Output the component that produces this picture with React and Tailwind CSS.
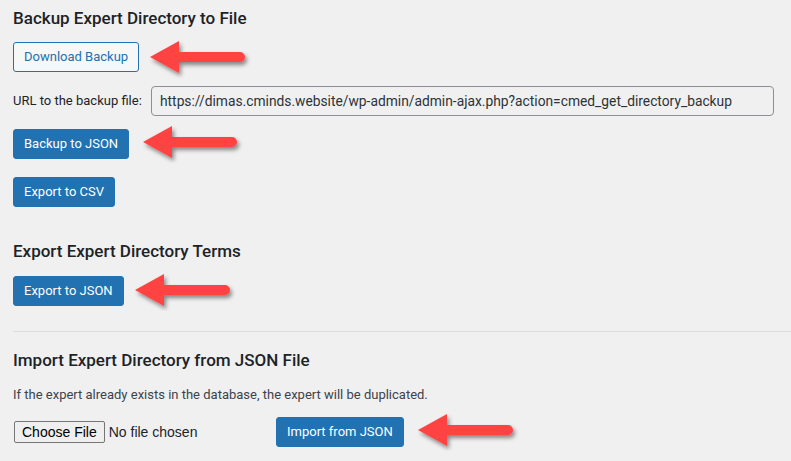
import React from "react";

const Arrow = ({ length = 96 }) => (
  <div className="h-[30px] flex items-center shrink-0">
    <svg width={length + 8} height="42" viewBox={`0 0 ${length + 8} 42`} className="shrink-0 block">
      <defs>
        <filter id="ashadow" x="-20%" y="-40%" width="140%" height="180%">
          <feDropShadow dx="2" dy="3" stdDeviation="2" floodColor="#000" floodOpacity="0.45" />
        </filter>
      </defs>
      <g filter="url(#ashadow)">
        <path
          d={`M1 21 L30 5 L30 16 L${length - 5} 16 A5 5 0 0 1 ${length - 5} 26 L30 26 L30 37 Z`}
          fill="#ff4242"
        />
      </g>
    </svg>
  </div>
);

const PrimaryBtn = ({ children }) => (
  <button className="h-[30px] px-[10px] rounded-[3px] bg-[#2271b1] text-white text-[13px] leading-[28px] border border-[#2271b1] whitespace-nowrap shrink-0">
    {children}
  </button>
);

export default function App() {
  return (
    <div
      className="w-full h-[461px] bg-[#f0f0f1] pl-[13px] overflow-hidden text-[#1d2327]"
      style={{ fontFamily: 'Roboto, "Noto Sans", sans-serif' }}
    >
      <div className="pt-[7px]">
        <h2 className="text-[17px] leading-[22px] font-medium">Backup Expert Directory to File</h2>

        <div className="mt-[13px] flex items-center gap-[10px]">
          <button className="h-[30px] px-[10px] rounded-[3px] bg-[#f6f7f7] text-[#2271b1] text-[13px] border border-[#2271b1] whitespace-nowrap shrink-0">
            Download Backup
          </button>
          <Arrow length={96} />
        </div>

        <div className="mt-[14px] flex items-center">
          <span className="text-[13px] text-[#1d2327] w-[138px] shrink-0">URL to the backup file:</span>
          <div className="w-[623px] h-[30px] border border-[#8c8f94] rounded-[4px] px-[8px] flex items-center text-[13.8px] text-[#2c3338] bg-[#f0f0f1] whitespace-nowrap overflow-hidden">
            https://dimas.cminds.website/wp-admin/admin-ajax.php?action=cmed_get_directory_backup
          </div>
        </div>

        <div className="mt-[13px] flex items-center gap-[13px]">
          <PrimaryBtn>Backup to JSON</PrimaryBtn>
          <div className="-mt-[4px]"><Arrow length={95} /></div>
        </div>

        <div className="mt-[18px] flex">
          <PrimaryBtn>Export to CSV</PrimaryBtn>
        </div>

        <h2 className="mt-[33px] text-[17px] leading-[22px] font-medium">Export Expert Directory Terms</h2>

        <div className="mt-[14px] flex items-center gap-[10px]">
          <PrimaryBtn>Export to JSON</PrimaryBtn>
          <div className="-mt-[2px]"><Arrow length={96} /></div>
        </div>

        <div className="mt-[25px] h-px bg-[#dcdcde]" />

        <h2 className="mt-[17px] text-[17px] leading-[22px] font-medium">Import Expert Directory from JSON File</h2>

        <p className="mt-[14px] text-[13px] leading-[20px] text-[#3c434a]">
          If the expert already exists in the database, the expert will be duplicated.
        </p>

        <div className="mt-[12px] flex items-center">
          <div className="w-[263px] flex items-center shrink-0" style={{ fontFamily: '"Liberation Sans", Arial, sans-serif' }}>
            <button className="ml-[1px] h-[22px] px-[7px] border border-[#767676] rounded-[2px] bg-[#efefef] text-[14px] text-black leading-none">
              Choose File
            </button>
            <span className="ml-[4px] text-[14px] text-[#1d2327]">No file chosen</span>
          </div>
          <PrimaryBtn>Import from JSON</PrimaryBtn>
          <div className="ml-[13px] -mt-[4px]"><Arrow length={96} /></div>
        </div>
      </div>
    </div>
  );
}
